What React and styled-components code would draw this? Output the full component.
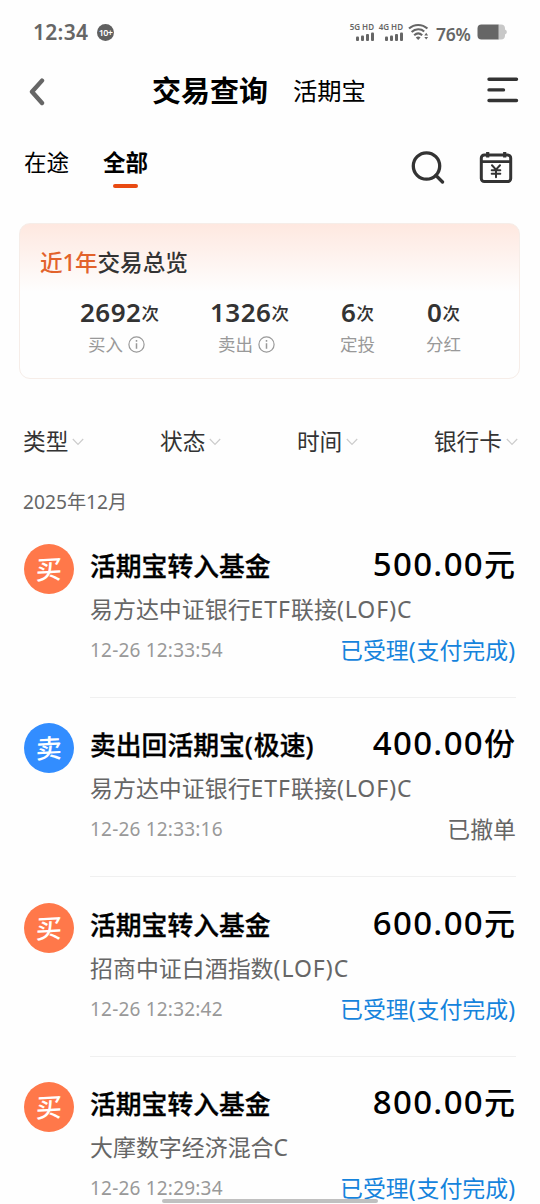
import React from 'react';
import styled, { createGlobalStyle } from 'styled-components';

const GlobalStyle = createGlobalStyle`
  * {
    box-sizing: border-box;
  }

  body {
    margin: 0;
    background: #fefefe;
    font-family: 'Noto Sans', 'Noto Sans CJK SC', sans-serif;
    color: #000;
  }
`;

const Page = styled.div`
  width: 540px;
  height: 1204px;
  overflow: hidden;
  display: flex;
  flex-direction: column;
  white-space: nowrap;

  > * {
    flex-shrink: 0;
  }
`;

/* status bar */

const StatusBar = styled.div`
  height: 60px;
  padding: 4px 33px 0;
  display: flex;
  align-items: center;
  color: #666;
`;

const Clock = styled.span`
  font-size: 21px;
  line-height: 24px;
  font-weight: 600;
  letter-spacing: 0.3px;
  width: 64px;
`;

const CountBadge = styled.span`
  width: 17px;
  height: 17px;
  border-radius: 50%;
  background: #606060;
  color: #fff;
  font-size: 9px;
  line-height: 17px;
  font-weight: 600;
  letter-spacing: -0.6px;
  text-align: center;
`;

const StatusRight = styled.div`
  margin-left: auto;
  display: flex;
  align-items: center;
`;

const Signal = styled.div`
  width: 25px;
  margin-right: 4px;
  display: flex;
  flex-direction: column;
  align-items: flex-end;

  svg {
    margin-right: 1px;
  }
`;

const SignalLabel = styled.span`
  margin: -2px 1px 1px 0;
  font-size: 8px;
  line-height: 9px;
  font-weight: 600;
`;

const Battery = styled.span`
  margin: 3px 6px 0 7px;
  width: 35px;
  font-size: 17.5px;
  line-height: 20px;
  font-weight: 600;
  letter-spacing: -0.2px;
`;

/* header */

const Header = styled.header`
  height: 62px;
  padding: 0 21px 0 29px;
  display: flex;
  align-items: center;
`;

const Titles = styled.div`
  display: flex;
  align-items: center;
  gap: 25px;
  margin: 0 auto 0 107px;
`;

const MainTitle = styled.h1`
  margin: 0;
  font-size: 29px;
  line-height: 40px;
  font-weight: 700;
`;

const SubTitle = styled.span`
  font-size: 24.3px;
  line-height: 40px;
`;

/* tabs */

const TabBar = styled.nav`
  height: 101px;
  padding: 26px 27px 0 24px;
  display: flex;
  align-items: flex-start;
`;

const Tab = styled.div`
  margin-right: 34px;
  font-size: 22.5px;
  line-height: 30px;
  font-weight: ${({ active }) => (active ? 700 : 400)};
  display: flex;
  flex-direction: column;
  align-items: center;

  &::after {
    content: '';
    width: 25px;
    height: 4px;
    margin-top: 6px;
    border-radius: 2px;
    background: ${({ active }) => (active ? '#e94a12' : 'transparent')};
  }
`;

const Tools = styled.div`
  margin-left: auto;
  display: flex;
  gap: 34px;
`;

/* overview card */

const Overview = styled.section`
  margin: 0 20px 0 19px;
  height: 156px;
  padding: 23px 18px 0 20px;
  border: 1px solid #f6ede8;
  border-radius: 11px;
  background: linear-gradient(180deg, #fee8e0 0, #fefefe 68px);
`;

const OverviewTitle = styled.h2`
  margin: 0;
  font-size: 22.6px;
  line-height: 32px;
  font-weight: 500;
  color: #333;
`;

const Accent = styled.span`
  color: #e2622b;
  letter-spacing: -0.2px;
`;

const Stats = styled.div`
  margin-top: 16px;
  display: flex;
  justify-content: center;
  gap: 51px;
`;

const Stat = styled.div`
  display: flex;
  flex-direction: column;
  align-items: center;
`;

const StatValue = styled.div`
  font-size: 26px;
  line-height: 34px;
  font-weight: 600;
  letter-spacing: 0.5px;
  color: #333;

  small {
    font-size: 17.5px;
    font-weight: 500;
    letter-spacing: 0;
    position: relative;
    top: -2px;
  }
`;

const StatLabel = styled.div`
  display: flex;
  align-items: center;
  gap: 5px;
  margin-top: -1px;
  font-size: 17.5px;
  line-height: 26px;
  color: #999;

  svg {
    margin-right: 6px;
  }
`;

/* filters */

const Filters = styled.div`
  margin-top: 45px;
  padding: 0 22px 0 23px;
  display: flex;
  justify-content: space-between;
`;

const Filter = styled.div`
  display: flex;
  align-items: center;
  gap: 4px;
  font-size: 22.7px;
  line-height: 36px;
  color: #333;
`;

const Month = styled.div`
  margin: 27px 0 -0.5px 23px;
  font-size: 19.2px;
  line-height: 30px;
  color: #666;
`;

/* records */

const Record = styled.article`
  height: 179.5px;
  padding: 0 24px;
  display: flex;
  gap: 16px;
`;

const Avatar = styled.div`
  flex: none;
  width: 50px;
  height: 50px;
  margin-top: 27px;
  border-radius: 50%;
  background: ${({ sell }) => (sell ? '#328dff' : '#ff784a')};
  color: #fff;
  display: flex;
  align-items: center;
  justify-content: center;

  span {
    font-size: 26px;
    line-height: 50px;
    font-weight: 500;
    transform: rotate(-3deg) skewX(-4deg);
  }
`;

const Detail = styled.div`
  flex: 1;
  padding-top: 27px;
`;

const Line = styled.div`
  display: flex;
  justify-content: space-between;
  align-items: flex-start;
`;

// latin letters and brackets sit a little looser than the characters
const Latin = styled.span`
  letter-spacing: 1px;
`;

const Name = styled.span`
  padding-top: 2px;
  font-size: 25.8px;
  line-height: 40px;
  font-weight: 500;
  -webkit-text-stroke: 0.3px #000;
`;

const Amount = styled.span`
  font-size: 33px;
  line-height: 40px;
  font-weight: 500;
  letter-spacing: 1.3px;

  small {
    font-size: 31px;
    letter-spacing: 0;
    margin-right: 1px;
  }
`;

const Fund = styled.div`
  padding-top: 2px;
  font-size: 22.95px;
  line-height: 42px;
  color: #666;
`;

const Time = styled.span`
  font-size: 19px;
  line-height: 40px;
  letter-spacing: 0.2px;
  color: #999;
`;

const State = styled.span`
  font-size: 22.9px;
  line-height: 42px;
  color: ${({ done }) => (done ? '#1583dc' : '#666')};
`;

const Divider = styled.div`
  height: 1px;
  margin-top: 25px;
  background: #f0f0f0;
`;

const HomeIndicator = styled.div`
  position: fixed;
  left: 162px;
  bottom: 1px;
  width: 216px;
  height: 4px;
  border-radius: 2px;
  background: #c0c0c0;
`;

const SignalBars = () => (
  <svg width="18" height="9" viewBox="0 0 18 9" fill="#666">
    <rect x="0" y="4.5" width="3" height="4.5" rx="1" />
    <rect x="5" y="3.5" width="3" height="5.5" rx="1" />
    <rect x="10" y="2" width="3" height="7" rx="1" />
    <rect x="15" y="0.5" width="3" height="8.5" rx="1" />
  </svg>
);

const WifiIcon = () => (
  <svg width="21" height="18" viewBox="0 0 21 18" fill="none" stroke="#666" strokeWidth="2.1">
    <path d="M1 5.6C6.2.7 14.2.7 19.4 5.6" />
    <path d="M3.6 9C7.4 5.4 13 5.4 16.2 8.4" />
    <path d="M6.2 12.2C8.6 10 11.8 10 14.2 12.2" />
    <path d="M7.8 14.4Q10.2 12.8 12.6 14.4L10.2 17Z" fill="#666" stroke="none" />
    <path d="M16.3 12.4L18.2 9.8L20.1 12.4ZM16.3 13.9L18.2 16.5L20.1 13.9Z" fill="#666" stroke="none" />
  </svg>
);

const BatteryIcon = () => (
  <svg width="30" height="16" viewBox="0 0 30 16">
    <path d="M21 .5H24a4 4 0 0 1 4 4V5.5a2.6 2.6 0 0 1 0 5V11.5a4 4 0 0 1-4 4H21Z" fill="#c8c8c8" />
    <path d="M21.5.5H4.5a4 4 0 0 0-4 4V11.5a4 4 0 0 0 4 4H21.5Z" fill="#666" />
  </svg>
);

const BackIcon = () => (
  <svg width="16" height="30" viewBox="0 0 16 30" fill="none" stroke="#666" strokeWidth="4.4" strokeLinecap="round" strokeLinejoin="round">
    <path d="M13 4.6L3 15.8L13 27" />
  </svg>
);

const MenuIcon = () => (
  <svg width="32" height="28" viewBox="0 0 32 28" stroke="#333" strokeWidth="3.4" strokeLinecap="round">
    <path d="M2 2.3H29.5M2 12.9H16.5M2 23.5H29.5" />
  </svg>
);

const SearchIcon = () => (
  <svg width="34" height="36" viewBox="0 0 34 36" fill="none" stroke="#333" strokeWidth="3.3" strokeLinecap="round">
    <circle cx="15.5" cy="18" r="13.2" />
    <path d="M25 27.5L31.5 34" />
  </svg>
);

const CalendarIcon = () => (
  <svg width="34" height="36" viewBox="0 0 34 36" fill="none" stroke="#333" strokeWidth="3" strokeLinecap="round">
    <rect x="2.3" y="7" width="29.4" height="26.5" rx="3" />
    <path d="M3 13.6H31" strokeWidth="2.6" />
    <path d="M8.7 4V9.5M25.7 4V9.5" strokeLinecap="butt" strokeWidth="3.2" />
    <path d="M13 17.3L17 21.6L21 17.3M17 21.6V29.3M12.7 22.3H21.3M12.7 25.8H21.3" strokeWidth="2" />
  </svg>
);

const InfoIcon = () => (
  <svg width="17" height="17" viewBox="0 0 17 17" fill="none" stroke="#999" strokeWidth="1.2">
    <circle cx="8.5" cy="8.5" r="7.6" />
    <path d="M8.5 7.3V12.8M8.5 4V5.8" strokeWidth="1.5" />
  </svg>
);

const ArrowIcon = () => (
  <svg width="12" height="8" viewBox="0 0 12 8" fill="none" stroke="#ccc" strokeWidth="1.2">
    <path d="M0.8 1L6 6.3L11.2 1" />
  </svg>
);

const Mixed = ({ text }) =>
  text
    .split(/([A-Z()]+)/)
    .map((part, i) => (i % 2 ? <Latin key={i}>{part}</Latin> : part));

const stats = [
  { value: 2692, label: '买入', info: true },
  { value: 1326, label: '卖出', info: true },
  { value: 6, label: '定投' },
  { value: 0, label: '分红' },
];

const filters = ['类型', '状态', '时间', '银行卡'];

const records = [
  { type: '买', name: '活期宝转入基金', amount: '500.00', unit: '元', fund: '易方达中证银行ETF联接(LOF)C', time: '12-26 12:33:54', state: '已受理(支付完成)', done: true },
  { type: '卖', name: '卖出回活期宝(极速)', amount: '400.00', unit: '份', fund: '易方达中证银行ETF联接(LOF)C', time: '12-26 12:33:16', state: '已撤单', done: false },
  { type: '买', name: '活期宝转入基金', amount: '600.00', unit: '元', fund: '招商中证白酒指数(LOF)C', time: '12-26 12:32:42', state: '已受理(支付完成)', done: true },
  { type: '买', name: '活期宝转入基金', amount: '800.00', unit: '元', fund: '大摩数字经济混合C', time: '12-26 12:29:34', state: '已受理(支付完成)', done: true },
];

const App = () => (
  <Page>
    <GlobalStyle />
    <StatusBar>
      <Clock>12:34</Clock>
      <CountBadge>10+</CountBadge>
      <StatusRight>
        {['5G HD', '4G HD'].map((label) => (
          <Signal key={label}>
            <SignalLabel>{label}</SignalLabel>
            <SignalBars />
          </Signal>
        ))}
        <WifiIcon />
        <Battery>76%</Battery>
        <BatteryIcon />
      </StatusRight>
    </StatusBar>

    <Header>
      <BackIcon />
      <Titles>
        <MainTitle>交易查询</MainTitle>
        <SubTitle>活期宝</SubTitle>
      </Titles>
      <MenuIcon />
    </Header>

    <TabBar>
      <Tab>在途</Tab>
      <Tab active="true">全部</Tab>
      <Tools>
        <SearchIcon />
        <CalendarIcon />
      </Tools>
    </TabBar>

    <Overview>
      <OverviewTitle>
        <Accent>近1年</Accent>交易总览
      </OverviewTitle>
      <Stats>
        {stats.map((item) => (
          <Stat key={item.label}>
            <StatValue>
              {item.value}
              <small>次</small>
            </StatValue>
            <StatLabel>
              {item.label}
              {item.info && <InfoIcon />}
            </StatLabel>
          </Stat>
        ))}
      </Stats>
    </Overview>

    <Filters>
      {filters.map((label) => (
        <Filter key={label}>
          {label}
          <ArrowIcon />
        </Filter>
      ))}
    </Filters>

    <Month>2025年12月</Month>

    {records.map((item) => (
      <Record key={item.time}>
        <Avatar sell={item.type === '卖' ? 'true' : undefined}>
          <span>{item.type}</span>
        </Avatar>
        <Detail>
          <Line>
            <Name><Mixed text={item.name} /></Name>
            <Amount>
              {item.amount}
              <small>{item.unit}</small>
            </Amount>
          </Line>
          <Fund><Mixed text={item.fund} /></Fund>
          <Line>
            <Time>{item.time}</Time>
            <State done={item.done ? 'true' : undefined}><Mixed text={item.state} /></State>
          </Line>
          <Divider />
        </Detail>
      </Record>
    ))}
    <HomeIndicator />
  </Page>
);

export default App;
